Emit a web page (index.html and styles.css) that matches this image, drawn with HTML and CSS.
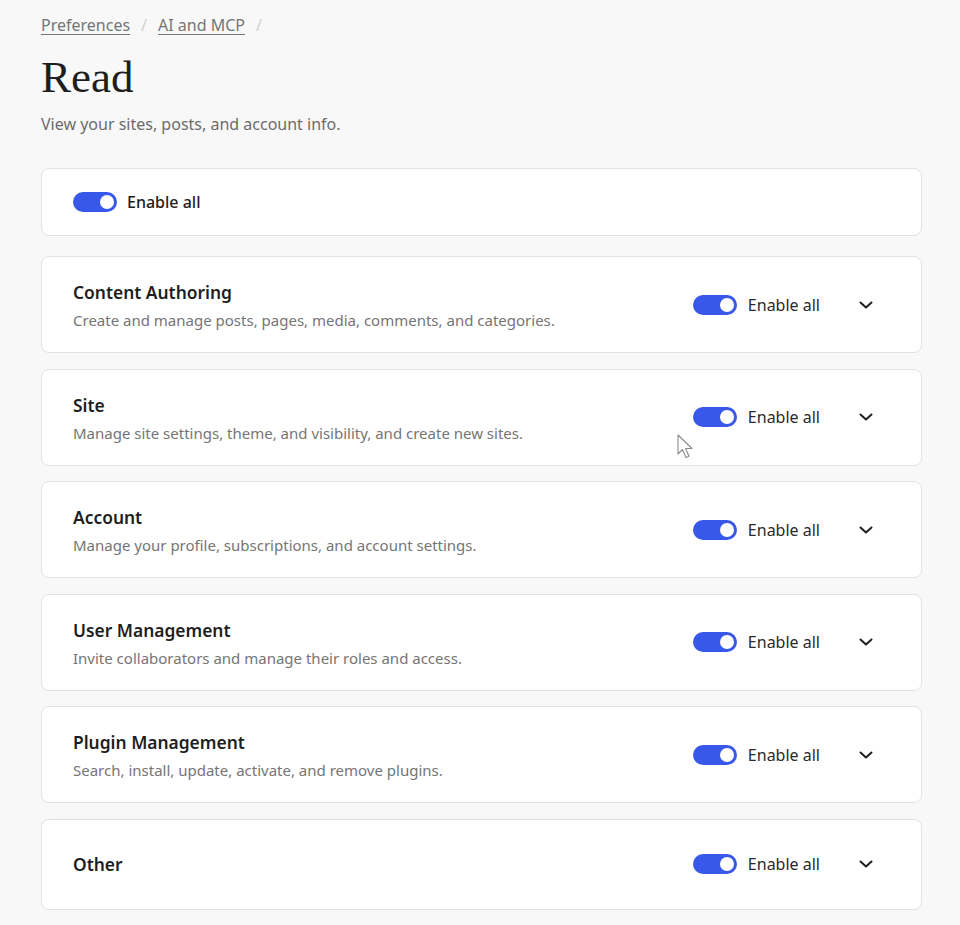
FILE: index.html
```html
<!DOCTYPE html>
<html lang="en">
<head>
<meta charset="utf-8">
<title>Read</title>
<link rel="stylesheet" href="styles.css">
</head>
<body>
<main class="page">
  <nav class="crumbs">
    <a href="#">Preferences</a><span class="sep">/</span><a href="#">AI and MCP</a><span class="sep">/</span>
  </nav>
  <h1 class="title">Read</h1>
  <p class="subtitle">View your sites, posts, and account info.</p>

  <section class="card master">
    <label class="toggle-row">
      <span class="switch"><span class="knob"></span></span>
      <span class="master-label">Enable all</span>
    </label>
  </section>

  <div class="groups">
    <section class="card group">
      <div class="info">
        <h2 class="g-title">Content Authoring</h2>
        <p class="g-desc">Create and manage posts, pages, media, comments, and categories.</p>
      </div>
      <div class="controls">
        <span class="switch"><span class="knob"></span></span>
        <span class="g-label">Enable all</span>
        <button class="chev" aria-label="Expand"><svg width="16" height="16" viewBox="0 0 16 16"><path d="M2.5 5.5 L8 10.5 L13.5 5.5" fill="none" stroke="#1e1e1e" stroke-width="2" stroke-linecap="round" stroke-linejoin="round"/></svg></button>
      </div>
    </section>

    <section class="card group">
      <div class="info">
        <h2 class="g-title">Site</h2>
        <p class="g-desc">Manage site settings, theme, and visibility, and create new sites.</p>
      </div>
      <div class="controls">
        <span class="switch"><span class="knob"></span></span>
        <span class="g-label">Enable all</span>
        <button class="chev" aria-label="Expand"><svg width="16" height="16" viewBox="0 0 16 16"><path d="M2.5 5.5 L8 10.5 L13.5 5.5" fill="none" stroke="#1e1e1e" stroke-width="2" stroke-linecap="round" stroke-linejoin="round"/></svg></button>
      </div>
    </section>

    <section class="card group">
      <div class="info">
        <h2 class="g-title">Account</h2>
        <p class="g-desc">Manage your profile, subscriptions, and account settings.</p>
      </div>
      <div class="controls">
        <span class="switch"><span class="knob"></span></span>
        <span class="g-label">Enable all</span>
        <button class="chev" aria-label="Expand"><svg width="16" height="16" viewBox="0 0 16 16"><path d="M2.5 5.5 L8 10.5 L13.5 5.5" fill="none" stroke="#1e1e1e" stroke-width="2" stroke-linecap="round" stroke-linejoin="round"/></svg></button>
      </div>
    </section>

    <section class="card group">
      <div class="info">
        <h2 class="g-title">User Management</h2>
        <p class="g-desc">Invite collaborators and manage their roles and access.</p>
      </div>
      <div class="controls">
        <span class="switch"><span class="knob"></span></span>
        <span class="g-label">Enable all</span>
        <button class="chev" aria-label="Expand"><svg width="16" height="16" viewBox="0 0 16 16"><path d="M2.5 5.5 L8 10.5 L13.5 5.5" fill="none" stroke="#1e1e1e" stroke-width="2" stroke-linecap="round" stroke-linejoin="round"/></svg></button>
      </div>
    </section>

    <section class="card group">
      <div class="info">
        <h2 class="g-title">Plugin Management</h2>
        <p class="g-desc">Search, install, update, activate, and remove plugins.</p>
      </div>
      <div class="controls">
        <span class="switch"><span class="knob"></span></span>
        <span class="g-label">Enable all</span>
        <button class="chev" aria-label="Expand"><svg width="16" height="16" viewBox="0 0 16 16"><path d="M2.5 5.5 L8 10.5 L13.5 5.5" fill="none" stroke="#1e1e1e" stroke-width="2" stroke-linecap="round" stroke-linejoin="round"/></svg></button>
      </div>
    </section>

    <section class="card group short">
      <div class="info">
        <h2 class="g-title">Other</h2>
      </div>
      <div class="controls">
        <span class="switch"><span class="knob"></span></span>
        <span class="g-label">Enable all</span>
        <button class="chev" aria-label="Expand"><svg width="16" height="16" viewBox="0 0 16 16"><path d="M2.5 5.5 L8 10.5 L13.5 5.5" fill="none" stroke="#1e1e1e" stroke-width="2" stroke-linecap="round" stroke-linejoin="round"/></svg></button>
      </div>
    </section>
  </div>
</main>
<svg class="cursor" width="18" height="26" viewBox="0 0 18 26"><path d="M1 1 L1 20 L5.5 15.5 L9 23.5 L12 22.2 L8.6 14.5 L15 14.5 Z" fill="#fff" stroke="#8a8a8a" stroke-width="1.1" stroke-linejoin="round"/></svg>
</body>
</html>
```
FILE: styles.css
```css
* { box-sizing: border-box; }
html, body { margin: 0; padding: 0; }
body {
  background: #f8f8f8;
  color: #1e1e1e;
  font-family: "Noto Sans", "Open Sans", "Liberation Sans", sans-serif;
  position: relative;
  min-height: 925px;
}
.page {
  padding: 13px 38px 0 41px;
  width: 960px;
}
.crumbs {
  font-size: 16px;
  line-height: 24px;
  color: #757575;
  display: flex;
  align-items: center;
}
.crumbs a {
  color: #757575;
  text-decoration: underline;
  text-underline-offset: 3px;
  text-decoration-thickness: 1px;
}
.crumbs .sep {
  color: #d0d0d0;
  margin: 0 11px;
}
.title {
  font-family: "Liberation Serif", "DejaVu Serif", serif;
  font-weight: 400;
  font-size: 45px;
  line-height: 52px;
  margin: 14px 0 0 0;
  color: #1e1e1e;
}
.subtitle {
  margin: 10px 0 0 0;
  font-size: 16px;
  line-height: 22px;
  color: #6c6c6c;
}
.card {
  background: #fff;
  border: 1px solid #e2e2e2;
  border-radius: 8px;
}
.master {
  margin-top: 33px;
  height: 68px;
  padding: 0 31px;
  display: flex;
  align-items: center;
}
.toggle-row {
  display: flex;
  align-items: center;
  gap: 10px;
}
.master-label {
  font-size: 16px;
  font-weight: 500;
  color: #1e1e1e;
}
.switch {
  width: 44px;
  height: 20px;
  border-radius: 10px;
  background: #3858e9;
  display: inline-flex;
  align-items: center;
  justify-content: flex-end;
  padding: 0 3px;
  flex: none;
}
.knob {
  width: 14px;
  height: 14px;
  border-radius: 50%;
  background: #fff;
}
.groups {
  margin-top: 20px;
  display: flex;
  flex-direction: column;
  gap: 15.6px;
}
.group {
  height: 97px;
  padding: 0 31px 0 31px;
  display: flex;
  align-items: center;
  justify-content: space-between;
}
.group.short { height: 91px; }
.info { display: flex; flex-direction: column; }
.g-title {
  margin: 0;
  font-size: 17.4px;
  font-weight: 600;
  line-height: 26px;
  color: #1e1e1e;
}
.g-desc {
  margin: 5px 0 0 0;
  font-size: 15px;
  line-height: 20px;
  color: #757575;
}
.controls {
  display: flex;
  align-items: center;
}
.g-label {
  margin-left: 11px;
  font-size: 16px;
  color: #2a2a2a;
}
.chev {
  margin-left: 22px;
  width: 48px;
  height: 40px;
  border: 0;
  background: transparent;
  display: flex;
  align-items: center;
  justify-content: center;
  padding: 0;
}
.cursor {
  position: absolute;
  left: 677px;
  top: 434px;
}
```
